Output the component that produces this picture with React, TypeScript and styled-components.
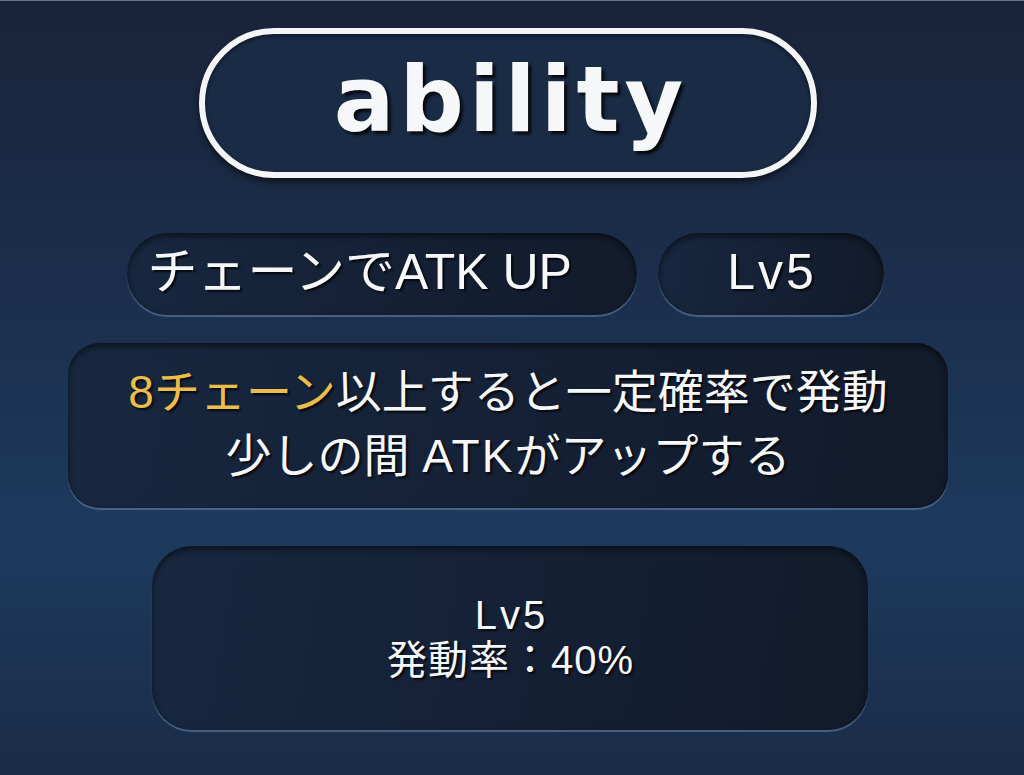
import styled, { createGlobalStyle } from "styled-components";

const GlobalStyle = createGlobalStyle`
	html, body {
		margin: 0;
		padding: 0;
	}
	body {
		font-family: "Liberation Sans", "Noto Sans CJK JP", sans-serif;
	}
`;

const Screen = styled.main`
	width: 1024px;
	height: 775px;
	box-sizing: border-box;
	border-top: 1px solid #6a7384;
	background: linear-gradient(
		180deg,
		#19243a 0%,
		#1b2e4b 35%,
		#1d3a5d 70%,
		#1a2c47 100%
	);
	display: flex;
	flex-direction: column;
	align-items: center;
	padding: 27px 8px 0 0;
	color: #f6f7f9;
	text-shadow: 2px 2px 2px rgba(0, 0, 0, 0.75);
`;

const TitlePill = styled.h1`
	margin: 0;
	width: 618px;
	height: 150px;
	box-sizing: border-box;
	border: 6px solid #f4f5f7;
	border-radius: 75px;
	background: #1a2b46;
	box-shadow:
		0 4px 6px rgba(0, 0, 0, 0.55),
		inset 0 2px 4px rgba(0, 0, 0, 0.45);
	display: flex;
	align-items: center;
	justify-content: center;
	font-family: "DejaVu Sans", "Liberation Sans", sans-serif;
	font-weight: 700;
	font-size: 90px;
	letter-spacing: 5px;
	line-height: 1;
	padding: 0 0 6px 6px;
	text-shadow: 3px 3px 3px rgba(0, 0, 0, 0.8);
`;

const Panel = styled.section<{ $w: number; $h: number; $r: number; $start?: boolean }>`
	width: ${(p) => p.$w}px;
	height: ${(p) => p.$h}px;
	box-sizing: border-box;
	border-radius: ${(p) => p.$r}px;
	padding-left: ${(p) => (p.$start ? "21px" : "0")};
	background: linear-gradient(100deg, #172840 0%, #141f33 60%, #131b2b 100%);
	box-shadow:
		inset 0 3px 6px rgba(0, 0, 0, 0.55),
		0 2px 1px rgba(110, 140, 180, 0.55);
	display: flex;
	flex-direction: column;
	align-items: ${(p) => (p.$start ? "flex-start" : "center")};
	justify-content: center;
`;

const InfoRow = styled.div`
	display: flex;
	gap: 21px;
	margin-top: 55px;
	padding-right: 6px;
`;

const PillText = styled.span<{ $spread?: number }>`
	font-size: 50px;
	line-height: 1;
	letter-spacing: ${(p) => p.$spread ?? 0}px;
	padding: 0 0 4px ${(p) => p.$spread ?? 0}px;
`;

const DescBlock = styled.div`
	margin-top: 28px;
`;

const DescText = styled.p`
	margin: 0;
	font-size: 46px;
	line-height: 64px;
	text-align: center;
	padding-bottom: 4px;
`;

const Accent = styled.span`
	color: #ecbd4a;
`;

const Latin = styled.span`
	letter-spacing: 2px;
`;

const LevelBlock = styled.div`
	margin-top: 38px;
	padding-left: 4px;
`;

const LevelLine = styled.span<{ $spread?: number }>`
	display: block;
	font-size: 40px;
	line-height: 45px;
	text-align: center;
	letter-spacing: ${(p) => p.$spread ?? 0}px;
	padding-left: ${(p) => p.$spread ?? 0}px;
`;

const App = () => {
	return (
		<>
			<GlobalStyle />
			<Screen>
				<TitlePill>ability</TitlePill>
				<InfoRow>
					<Panel $w={510} $h={82} $r={41} $start>
						<PillText>チェーンでATK UP</PillText>
					</Panel>
					<Panel $w={226} $h={82} $r={41}>
						<PillText $spread={3}>Lv5</PillText>
					</Panel>
				</InfoRow>
				<DescBlock>
					<Panel $w={880} $h={165} $r={32}>
						<DescText>
							<Accent>8チェーン</Accent>以上すると一定確率で発動
							<br />
							少しの間 <Latin>ATK</Latin>がアップする
						</DescText>
					</Panel>
				</DescBlock>
				<LevelBlock>
					<Panel $w={716} $h={184} $r={40}>
						<LevelLine $spread={3}>Lv5</LevelLine>
						<LevelLine $spread={1}>発動率：40%</LevelLine>
					</Panel>
				</LevelBlock>
			</Screen>
		</>
	);
};

export default App;
